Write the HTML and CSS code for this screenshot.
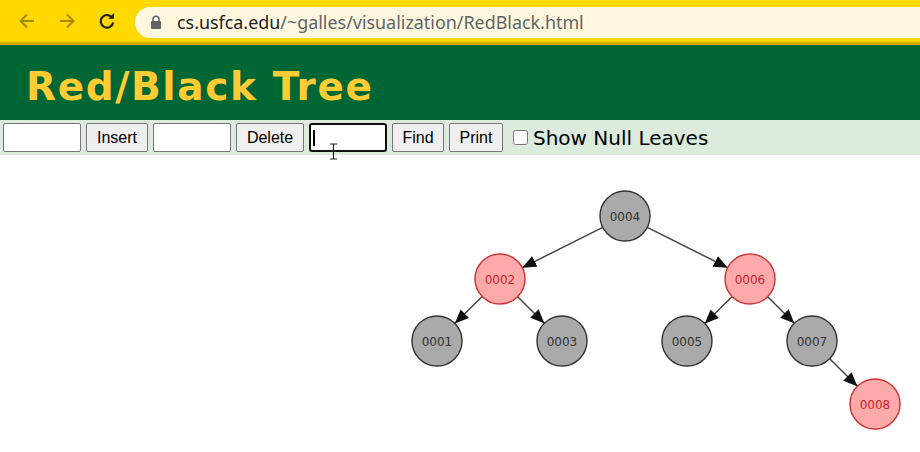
FILE: index.html
```html
<!DOCTYPE html>
<html>
<head>
<meta charset="utf-8">
<link rel="stylesheet" href="styles.css">
</head>
<body>
<div class="chrome">
  <div class="nav">
    <svg class="ico" width="20" height="20" viewBox="0 0 20 20"><path d="M17 10H4M10 3.5L3.5 10L10 16.5" fill="none" stroke="#a8880c" stroke-width="2"/></svg>
    <svg class="ico" width="20" height="20" viewBox="0 0 20 20"><path d="M3 10H16M10 3.5L16.5 10L10 16.5" fill="none" stroke="#a8880c" stroke-width="2"/></svg>
    <svg class="ico" width="20" height="20" viewBox="0 0 20 20"><path d="M15.5 7.2A6.3 6.3 0 1 0 16.2 11.5" fill="none" stroke="#222" stroke-width="2.2"/><path d="M11.2 7.8H17V2z" fill="#222"/></svg>
  </div>
  <div class="omnibox">
    <svg class="lock" width="12" height="14" viewBox="0 0 12 14"><path d="M3 6V4.2a3 3 0 0 1 6 0V6" fill="none" stroke="#5f6368" stroke-width="1.6"/><rect x="1" y="6" width="10" height="8" rx="1" fill="#5f6368"/></svg>
    <span class="host">cs.usfca.edu</span><span class="path">/~galles/visualization/RedBlack.html</span>
  </div>
</div>
<div class="chrome-edge"></div>
<header class="banner"><h1>Red/Black Tree</h1></header>
<div class="toolbar">
  <input class="field" type="text">
  <button class="btn w-insert">Insert</button>
  <input class="field" type="text">
  <button class="btn w-delete">Delete</button>
  <div class="caret-wrap">
    <input class="field focused" type="text">
    <svg class="ibeam" width="9" height="17" viewBox="0 0 9 17"><path d="M1 1H8M4.5 1V16M1 16H8" fill="none" stroke="#222" stroke-width="1.2"/><path d="M2 8.5H7" stroke="#222" stroke-width="1"/></svg>
  </div>
  <button class="btn w-find">Find</button>
  <button class="btn w-print">Print</button>
  <label class="nulls"><input type="checkbox" class="chk">Show Null Leaves</label>
</div>
<div class="canvas">
<svg width="920" height="297" viewBox="0 155 920 297">
  <defs>
    <marker id="ah" markerUnits="userSpaceOnUse" markerWidth="14" markerHeight="12" refX="14" refY="6" orient="auto">
      <path d="M0,0 L14,6 L0,12 z" fill="#111"/>
    </marker>
  </defs>
  <g class="edges">
    <line x1="602.7" y1="227.3" x2="522.3" y2="267.7"/>
    <line x1="647.3" y1="227.3" x2="727.7" y2="267.7"/>
    <line x1="482.2" y1="296.5" x2="454.8" y2="323.5"/>
    <line x1="517.7" y1="296.7" x2="544.3" y2="323.3"/>
    <line x1="732.2" y1="296.5" x2="704.8" y2="323.5"/>
    <line x1="767.7" y1="296.7" x2="794.3" y2="323.3"/>
    <line x1="829.7" y1="358.7" x2="857.3" y2="386.3"/>
  </g>
  <g class="node black"><circle cx="625" cy="216" r="25"/><text x="625" y="220.5">0004</text></g>
  <g class="node red"><circle cx="500" cy="279" r="25"/><text x="500" y="283.5">0002</text></g>
  <g class="node red"><circle cx="750" cy="279" r="25"/><text x="750" y="283.5">0006</text></g>
  <g class="node black"><circle cx="437" cy="341" r="25"/><text x="437" y="345.5">0001</text></g>
  <g class="node black"><circle cx="562" cy="341" r="25"/><text x="562" y="345.5">0003</text></g>
  <g class="node black"><circle cx="687" cy="341" r="25"/><text x="687" y="345.5">0005</text></g>
  <g class="node black"><circle cx="812" cy="341" r="25"/><text x="812" y="345.5">0007</text></g>
  <g class="node red"><circle cx="875" cy="404" r="25"/><text x="875" y="408.5">0008</text></g>
</svg>
</div>
</body>
</html>
```
FILE: styles.css
```css
html, body {
  margin: 0;
  padding: 0;
  background: #fff;
  width: 920px;
  height: 452px;
  overflow: hidden;
}
.chrome {
  height: 42px;
  background: #ffd800;
  display: flex;
  align-items: center;
}
.nav {
  display: flex;
  align-items: center;
  gap: 20px;
  padding-left: 17px;
  width: 118px;
}
.ico { display: block; }
.omnibox {
  flex: 1;
  height: 31px;
  margin-top: 2px;
  background: #fff8df;
  border-radius: 16px 0 0 16px;
  display: flex;
  align-items: center;
  padding-left: 15px;
  font-family: "Noto Sans", "Open Sans", sans-serif;
  font-size: 17.9px;
}
.lock { margin-right: 15px; }
.host { color: #202124; }
.path { color: #5f6368; }
.chrome-edge {
  height: 3px;
  background: #d2ab00;
}
.banner {
  box-sizing: border-box;
  height: 75px;
  background: #006634;
  display: flex;
  align-items: center;
  padding-left: 26px;
  padding-top: 8px;
}
.banner h1 {
  margin: 0;
  font-family: "DejaVu Sans", Verdana, sans-serif;
  font-weight: bold;
  font-size: 39px;
  letter-spacing: 1.6px;
  color: #ffcc33;
}
.toolbar {
  height: 35px;
  background: #dcebdc;
  display: flex;
  align-items: center;
  gap: 5px;
  padding-left: 3px;
  font-family: "Liberation Sans", Arial, sans-serif;
}
.field {
  box-sizing: border-box;
  width: 78px;
  height: 29px;
  border: 1px solid #767676;
  border-radius: 2px;
  background: #fff;
  margin: 0;
  padding: 1px 3px;
  display: block;
}
.caret-wrap {
  position: relative;
}
.caret-wrap::after {
  content: "";
  position: absolute;
  left: 4px;
  top: 7px;
  width: 2px;
  height: 16px;
  background: #000;
}
.ibeam {
  position: absolute;
  left: 20px;
  top: 20px;
}
.field.focused {
  border: 2px solid #101010;
  border-radius: 3px;
}
.btn {
  box-sizing: border-box;
  height: 29px;
  margin: 0;
  padding: 0;
  border: 1px solid #767676;
  border-radius: 2px;
  background: #efefef;
  font-family: "Liberation Sans", Arial, sans-serif;
  font-size: 16px;
  color: #000;
}
.w-insert { width: 62px; }
.w-delete { width: 68px; }
.w-find { width: 52px; }
.w-print { width: 54px; }
.nulls {
  display: flex;
  align-items: center;
  margin-left: 0;
  font-family: "DejaVu Sans", Verdana, sans-serif;
  font-size: 20px;
  color: #000;
}
.chk {
  width: 15px;
  height: 15px;
  margin: 0 5px 0 5px;
}
.canvas {
  height: 297px;
}
.canvas svg { display: block; }
.edges line {
  stroke: #444;
  stroke-width: 1.5;
  marker-end: url(#ah);
}
.node circle { stroke-width: 1.4; }
.node text {
  font-family: "DejaVu Sans", Tahoma, sans-serif;
  font-size: 12px;
  text-anchor: middle;
}
.node.black circle { fill: #aaaaaa; stroke: #333; }
.node.black text { fill: #333; }
.node.red circle { fill: #ffaaaa; stroke: #d03030; }
.node.red text { fill: #c8242b; }
```
